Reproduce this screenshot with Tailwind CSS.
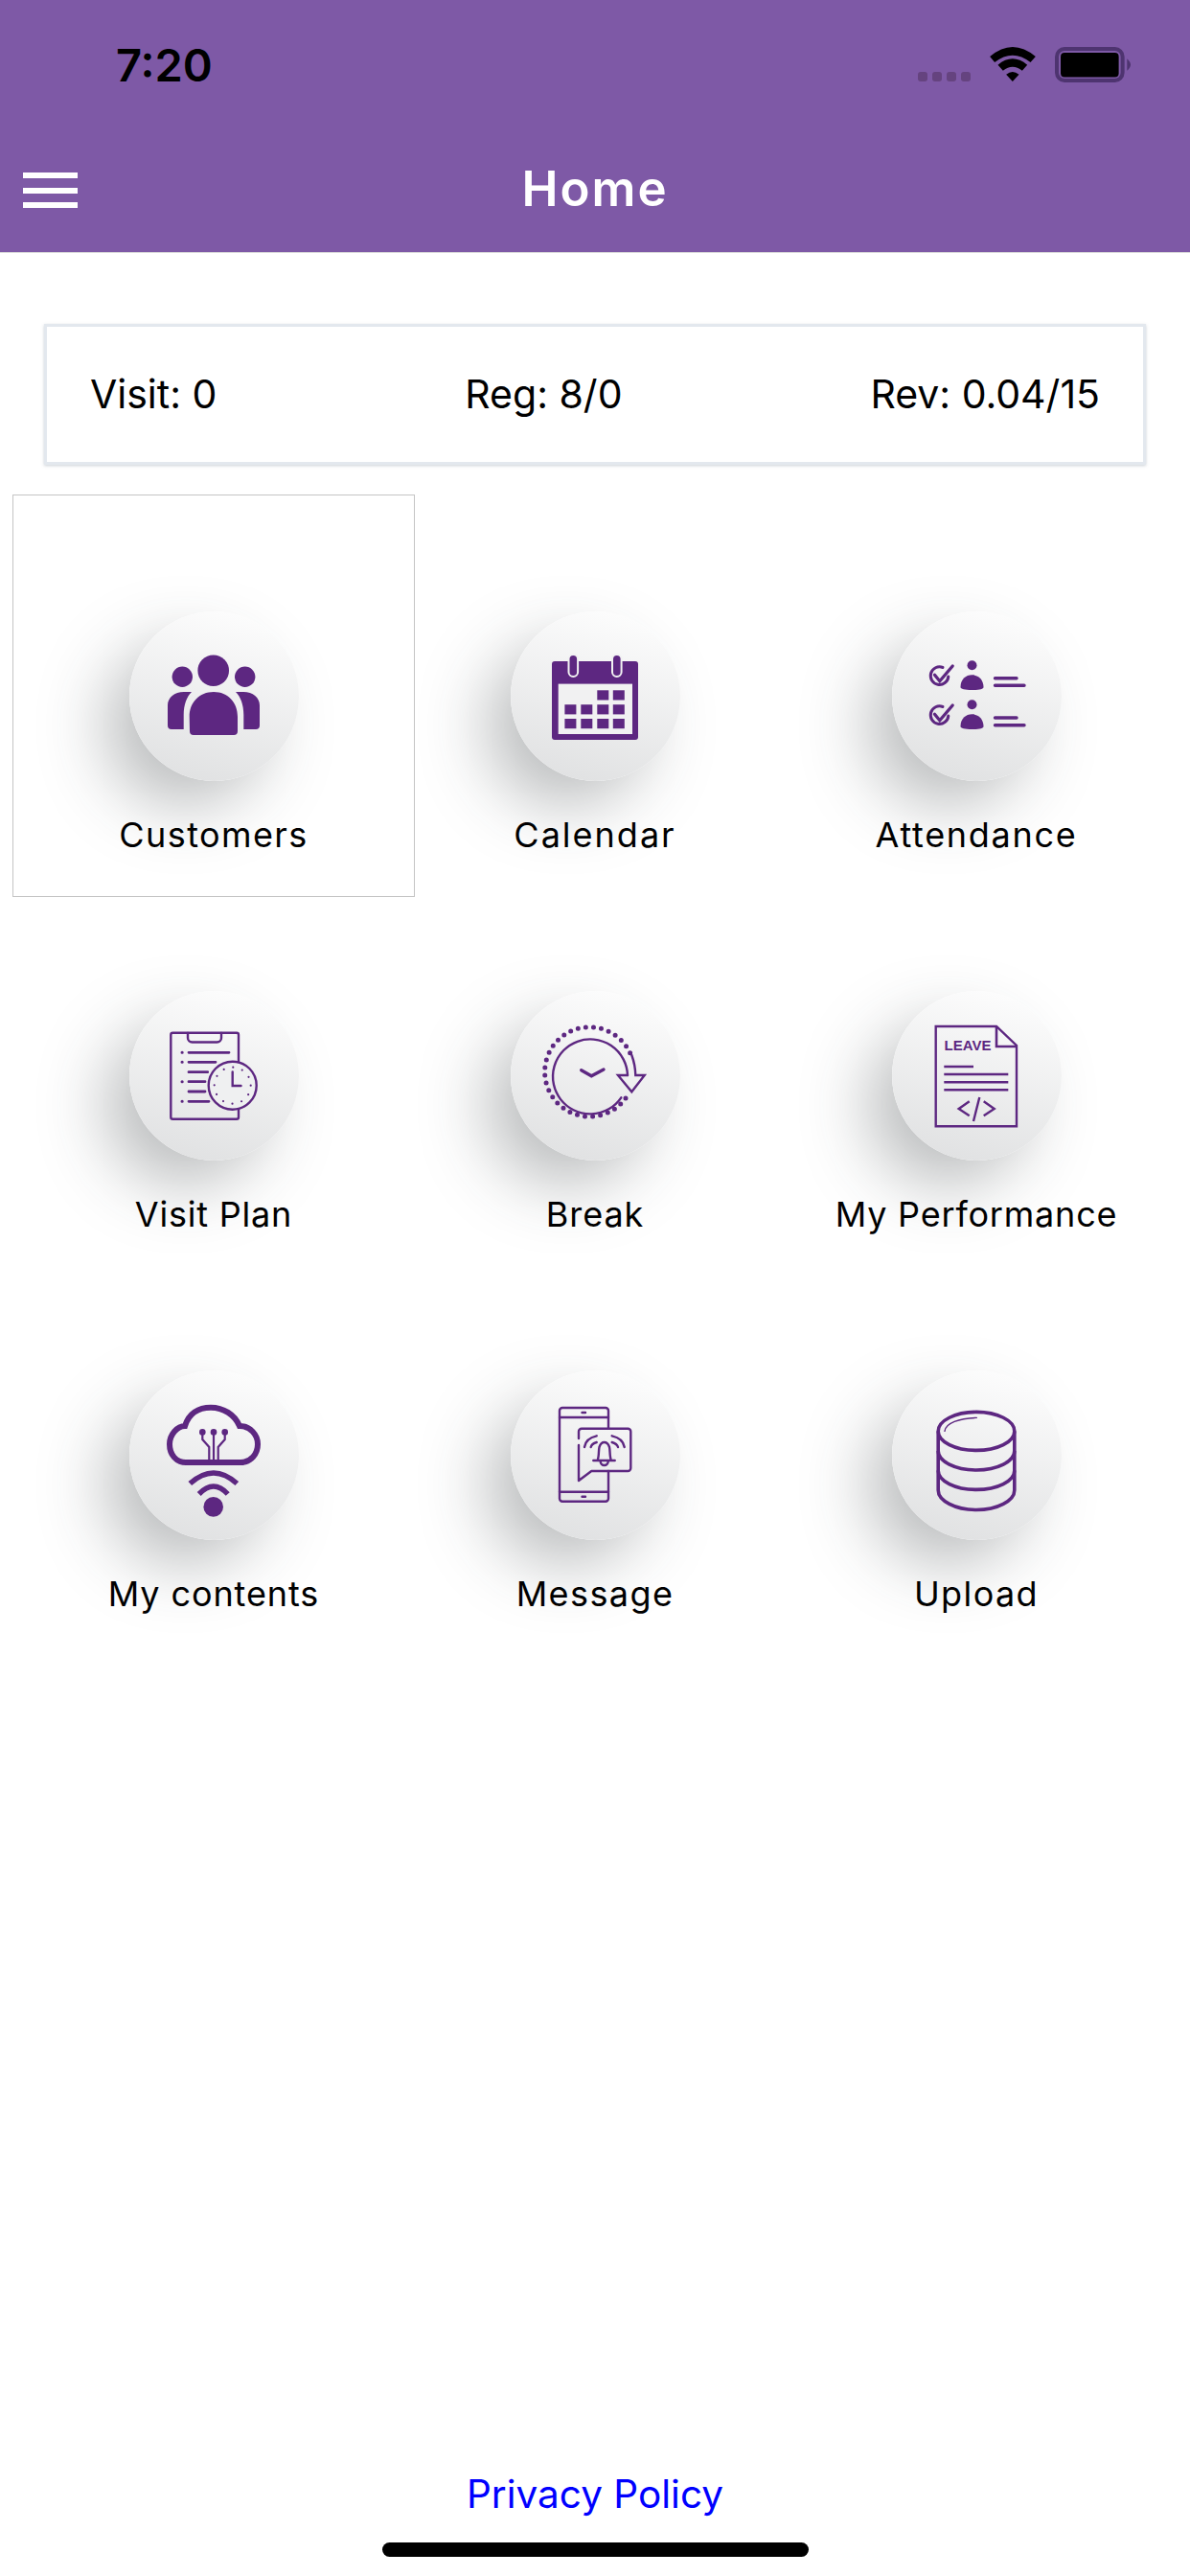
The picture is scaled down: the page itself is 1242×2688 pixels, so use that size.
<!DOCTYPE html>
<html lang="en">
<head>
    <meta charset="UTF-8">
    <meta name="viewport" content="width=device-width, initial-scale=1.0">
    <title>Home</title>
    <script src="https://cdn.jsdelivr.net/npm/@tailwindcss/browser@4"></script>
</head>
<body class="bg-white font-['Inter',sans-serif]">
    <div class="h-[2688px] flex flex-col">

        <!-- Header -->
        <header class="h-[264px] bg-[#7e59a6] border-b border-[#d9d9d9] flex flex-col shrink-0">
            <div class="h-[180px] flex items-start justify-between pt-[42px] pl-[121px] pr-[62px]">
                <span class="text-[47px] leading-[52px] font-semibold text-black">7:20</span>
                <div class="flex items-start pt-[7px]">
                    <div class="flex gap-[5px] mt-[26px] mr-[20px]">
                        <span class="w-[10px] h-[10px] rounded-[3px] bg-[#65437f]"></span>
                        <span class="w-[10px] h-[10px] rounded-[3px] bg-[#65437f]"></span>
                        <span class="w-[10px] h-[10px] rounded-[3px] bg-[#65437f]"></span>
                        <span class="w-[10px] h-[10px] rounded-[3px] bg-[#65437f]"></span>
                    </div>
                    <svg class="mr-[20px]" width="48" height="36" viewBox="275 42 143 108">
                        <path d="M275 72 Q346 12 418 72 L402 90 Q346 46 290 90Z" fill="#000"/>
                        <path d="M300 98 Q346 60 392 98 L376 116 Q346 92 316 116Z" fill="#000"/>
                        <path d="M326 128 Q346 112 366 128 L346 150Z" fill="#000"/>
                    </svg>
                    <svg width="79" height="37" viewBox="478 42 236 110">
                        <rect x="484" y="48" width="205" height="98" rx="24" fill="none" stroke="#4e3470" stroke-width="12"/>
                        <rect x="496" y="60" width="181" height="76" rx="12" fill="#000"/>
                        <path d="M703 78 Q714 88 714 97 Q714 106 703 116Z" fill="#4e3470"/>
                    </svg>
                </div>
            </div>
            <div class="relative flex items-center justify-center h-[37px]">
                <button class="absolute left-[24px] top-0 w-[57px] h-[37px] flex flex-col justify-between">
                    <span class="block h-[6px] bg-white"></span>
                    <span class="block h-[6px] bg-white"></span>
                    <span class="block h-[6px] bg-white"></span>
                </button>
                <h1 class="text-[51px] leading-[52px] tracking-[2px] font-semibold text-white -mt-[3px]">Home</h1>
            </div>
        </header>

        <!-- Stats -->
        <div class="mt-[74px] mx-[46px] h-[147px] bg-white border-[3px] border-[#e3e8ee] shadow-[0_1px_3px_rgba(110,125,140,0.35)] flex items-center justify-between px-[45px] text-[41px] text-black shrink-0">
            <span>Visit: 0</span>
            <span>Reg: 8/0</span>
            <span>Rev: 0.04/15</span>
        </div>

        <!-- Menu grid -->
        <div class="mt-[31px] ml-[24px] grid grid-cols-[repeat(3,398px)] auto-rows-[396px] text-[36px] leading-[40px] tracking-[1.4px] text-black text-center">

            <div class="relative pt-[122px]">
                <div class="absolute -left-[11px] top-0 w-[420px] h-[420px] border-[1.5px] border-[#c4c4c4]"></div>
                <div class="w-[177px] h-[177px] mx-auto rounded-full bg-linear-[195deg] from-white to-[#dedfe0] shadow-[-30px_30px_70px_-6px_rgba(50,55,60,0.34)]">
                    <svg class="block w-full h-full" viewBox="0 0 177 177" fill="#5d2781">
                        <circle cx="87.7" cy="61.7" r="16.3"/>
                        <circle cx="55.3" cy="68.3" r="10.7"/>
                        <circle cx="120.7" cy="68.3" r="10.7"/>
                        <path d="M62.7 110 C62.7 95 73 84 88 84 C103 84 113 95 113 110 V125 a4 4 0 0 1 -4 4 H67 a4 4 0 0 1 -4 -4Z"/>
                        <path d="M57 84 H65 C60 89 56.7 97 56.7 108 V123 H44 a4 4 0 0 1 -4 -4 V98 C40 90 47 84 57 84Z"/>
                        <path d="M119 84 H111 C116 89 119.3 97 119.3 108 V123 H132 a4 4 0 0 0 4 -4 V98 C136 90 129 84 119 84Z"/>
                    </svg>
                </div>
                <p class="relative mt-[36px]">Customers</p>
            </div>

            <div class="pt-[122px]">
                <div class="w-[177px] h-[177px] mx-auto rounded-full bg-linear-[195deg] from-white to-[#dedfe0] shadow-[-30px_30px_70px_-6px_rgba(50,55,60,0.34)]">
                    <svg class="block w-full h-full" viewBox="0 0 177 177" fill="#5d2781">
                        <path d="M46 52 H130 a3 3 0 0 1 3 3 V131 a3 3 0 0 1 -3 3 H46 a3 3 0 0 1 -3 -3 V55 a3 3 0 0 1 3 -3Z"/>
                        <rect x="49.7" y="75.6" width="77.3" height="52.4" fill="#f1f1f2"/>
                        <rect x="60.5" y="45" width="9.6" height="23" rx="4.8" fill="#5d2781" stroke="#f1f1f2" stroke-width="2"/>
                        <rect x="106" y="45" width="9.6" height="23" rx="4.8" fill="#5d2781" stroke="#f1f1f2" stroke-width="2"/>
                        <rect x="90.3" y="82.3" width="12" height="10.2"/>
                        <rect x="106.8" y="82.3" width="12" height="10.2"/>
                        <rect x="56.4" y="97.2" width="12" height="10.2"/>
                        <rect x="73.3" y="97.2" width="12" height="10.2"/>
                        <rect x="90.3" y="97.2" width="12" height="10.2"/>
                        <rect x="106.8" y="97.2" width="12" height="10.2"/>
                        <rect x="56.4" y="112" width="12" height="10.2"/>
                        <rect x="73.3" y="112" width="12" height="10.2"/>
                        <rect x="90.3" y="112" width="12" height="10.2"/>
                        <rect x="106.8" y="112" width="12" height="10.2"/>
                    </svg>
                </div>
                <p class="mt-[36px] tracking-[2px]">Calendar</p>
            </div>

            <div class="pt-[122px]">
                <div class="w-[177px] h-[177px] mx-auto rounded-full bg-linear-[195deg] from-white to-[#dedfe0] shadow-[-30px_30px_70px_-6px_rgba(50,55,60,0.34)]">
                    <svg class="block w-full h-full" viewBox="0 0 177 177" fill="none" stroke="#5d2781" stroke-linecap="round">
                        <g>
                            <path d="M58.8 68 A9.3 9.3 0 1 1 53 58.5" stroke-width="3"/>
                            <path d="M44.5 66.3 L49.8 72.7 L63.2 57" stroke-width="3.3"/>
                            <circle cx="83.5" cy="56.3" r="5" fill="#5d2781" stroke="none"/>
                            <path d="M71.5 79 C71.5 71 77 66.3 83.5 66.3 C90 66.3 95.5 71 95.5 79 C95.5 81 91 82 83.5 82 C76 82 71.5 81 71.5 79Z" fill="#5d2781" stroke="none"/>
                            <path d="M107.5 69.7 H130 M107.5 77.3 H138" stroke-width="3.4"/>
                        </g>
                        <g transform="translate(0 41)">
                            <path d="M58.8 68 A9.3 9.3 0 1 1 53 58.5" stroke-width="3"/>
                            <path d="M44.5 66.3 L49.8 72.7 L63.2 57" stroke-width="3.3"/>
                            <circle cx="83.5" cy="56.3" r="5" fill="#5d2781" stroke="none"/>
                            <path d="M71.5 79 C71.5 71 77 66.3 83.5 66.3 C90 66.3 95.5 71 95.5 79 C95.5 81 91 82 83.5 82 C76 82 71.5 81 71.5 79Z" fill="#5d2781" stroke="none"/>
                            <path d="M107.5 70 H130 M107.5 77.7 H138" stroke-width="3.4"/>
                        </g>
                    </svg>
                </div>
                <p class="mt-[36px] tracking-[1.7px]">Attendance</p>
            </div>

            <div class="pt-[122px]">
                <div class="w-[177px] h-[177px] mx-auto rounded-full bg-linear-[195deg] from-white to-[#dedfe0] shadow-[-30px_30px_70px_-6px_rgba(50,55,60,0.34)]">
                    <svg class="block w-full h-full" viewBox="0 0 177 177" fill="none" stroke="#5d2781" stroke-width="2.4" stroke-linecap="round">
                        <rect x="43.3" y="43.7" width="70.7" height="90" rx="2"/>
                        <path d="M61 44 V49 a4.5 4.5 0 0 0 4.5 4.5 H91.5 a4.5 4.5 0 0 0 4.5 -4.5 V44"/>
                        <path d="M62 64.3 H104 M62 74.3 H90 M62 84.7 H81.7 M62 94.7 H79 M62 105 H79 M62 115.3 H83" stroke-width="2.8"/>
                        <path d="M55 64.3 h.2 M55 74.3 h.2 M55 94.7 h.2 M55 115.3 h.2" stroke-width="3"/>
                        <circle cx="107.7" cy="98.7" r="25" fill="#eff0f1"/>
                        <path d="M107.7 84.5 V99 H116.5"/>
                        <circle cx="107.7" cy="98.7" r="19" stroke-width="2.2" stroke-dasharray="0 9.95"/>
                    </svg>
                </div>
                <p class="mt-[36px] tracking-[0.8px]">Visit Plan</p>
            </div>

            <div class="pt-[122px]">
                <div class="w-[177px] h-[177px] mx-auto rounded-full bg-linear-[195deg] from-white to-[#dedfe0] shadow-[-30px_30px_70px_-6px_rgba(50,55,60,0.34)]">
                    <svg class="block w-full h-full" viewBox="0 0 177 177" fill="none" stroke="#5d2781" stroke-width="2.4" stroke-linecap="round">
                        <path d="M120 112 A46.7 46.7 0 1 1 126 68" stroke-width="5" stroke-dasharray="0 8.1"/>
                        <path d="M115.3 111.3 A39 39 0 1 1 122 88"/>
                        <path d="M73.7 82.7 L84.3 88.7 L97 82" stroke-width="3.4"/>
                        <path d="M126.3 67 Q130 77 130.3 88 H139.7 L126.3 105.3 L112 88 H122" stroke-linejoin="miter"/>
                    </svg>
                </div>
                <p class="mt-[36px] tracking-[0.9px]">Break</p>
            </div>

            <div class="pt-[122px]">
                <div class="w-[177px] h-[177px] mx-auto rounded-full bg-linear-[195deg] from-white to-[#dedfe0] shadow-[-30px_30px_70px_-6px_rgba(50,55,60,0.34)]">
                    <svg class="block w-full h-full" viewBox="0 0 177 177" fill="none" stroke="#5d2781" stroke-width="2.4">
                        <path d="M45.7 37 H109 L130 57 V141.3 H45.7Z"/>
                        <path d="M109 37 V58 H130" stroke-width="2.6"/>
                        <text x="54.5" y="62" fill="#5d2781" stroke="none" font-family="Liberation Sans" font-weight="700" font-size="15" letter-spacing="0">LEAVE</text>
                        <path d="M54.3 79 H85 M54.3 87 H121.3 M54.3 95.3 H121.3 M54.3 103.3 H121.3"/>
                        <path d="M80.7 115.3 L69.7 123 L80.7 130.3 M95.7 115.3 L106.7 123 L95.7 130.3 M91.3 111 L85 136"/>
                    </svg>
                </div>
                <p class="mt-[36px] tracking-[0.8px]">My Performance</p>
            </div>

            <div class="pt-[122px]">
                <div class="w-[177px] h-[177px] mx-auto rounded-full bg-linear-[195deg] from-white to-[#dedfe0] shadow-[-30px_30px_70px_-6px_rgba(50,55,60,0.34)]">
                    <svg class="block w-full h-full" viewBox="0 0 177 177" fill="none" stroke="#5d2781">
                        <path d="M59 96 H116 C127 96 134 87 134 77 C134 67 126 58 115 58 C110 46 98 38.7 85 38.7 C72 38.7 62 45 58 58 C50 58 42 67 42 77 C42 88 49 96 59 96Z" stroke-width="6"/>
                        <path d="M76.3 64 V72 L83.3 80 V96 M88 64 V96 M99.7 64 V72 L92.7 80 V96" stroke-width="2.2"/>
                        <circle cx="76.3" cy="64.4" r="3.3" fill="#5d2781" stroke="none"/>
                        <circle cx="88" cy="64.4" r="3.3" fill="#5d2781" stroke="none"/>
                        <circle cx="99.7" cy="64.4" r="3.3" fill="#5d2781" stroke="none"/>
                        <path d="M63.3 118 Q88 96 112.3 118" stroke-width="5.5"/>
                        <path d="M72.7 129 Q88 113 102.7 129" stroke-width="5.5"/>
                        <circle cx="87.7" cy="142.4" r="10.3" fill="#5d2781" stroke="none"/>
                    </svg>
                </div>
                <p class="mt-[36px] tracking-[0.9px]">My contents</p>
            </div>

            <div class="pt-[122px]">
                <div class="w-[177px] h-[177px] mx-auto rounded-full bg-linear-[195deg] from-white to-[#dedfe0] shadow-[-30px_30px_70px_-6px_rgba(50,55,60,0.34)]">
                    <svg class="block w-full h-full" viewBox="0 0 177 177" fill="none" stroke="#5d2781" stroke-width="2.4" stroke-linecap="round" stroke-linejoin="round">
                        <path d="M102 60.7 V42 a3 3 0 0 0 -3 -3 H54 a3 3 0 0 0 -3 3 V133.7 a3 3 0 0 0 3 3 H99 a3 3 0 0 0 3 -3 V105"/>
                        <path d="M51 49 H102 M51 126.7 H102"/>
                        <path d="M74.5 44 H78 M74.5 131.7 H78" stroke-width="2.4"/>
                        <path d="M71 71 V63.7 a3 3 0 0 1 3 -3 H122.3 a3 3 0 0 1 3 3 V102 a3 3 0 0 1 -3 3 H84.3 L71 115 V78"/>
                        <path d="M86.3 94 H108.7 M90.5 94 C92.5 90 91.5 84 92.5 80 C93.5 77 95.5 75 97.7 75 C100 75 102 77 103 80 C104 84 103 90 105 94"/>
                        <path d="M93.7 95 a4 4 0 0 0 8 0"/>
                        <path d="M77 80 Q78 71 89.7 68.3 M83.7 80 Q84.5 76.5 89.7 75 M118.7 80 Q117.5 71 105.7 68.3 M112 80 Q111 76.5 105.7 75"/>
                    </svg>
                </div>
                <p class="mt-[36px]">Message</p>
            </div>

            <div class="pt-[122px]">
                <div class="w-[177px] h-[177px] mx-auto rounded-full bg-linear-[195deg] from-white to-[#dedfe0] shadow-[-30px_30px_70px_-6px_rgba(50,55,60,0.34)]">
                    <svg class="block w-full h-full" viewBox="0 0 177 177" fill="none" stroke="#5d2781" stroke-width="3.6">
                        <ellipse cx="88" cy="63.4" rx="39.8" ry="20"/>
                        <path d="M48.2 63.4 V125 C48.2 136 66 145.5 88 145.5 C110 145.5 127.8 136 127.8 125 V63.4"/>
                        <path d="M48.2 84 C48.2 95 66 104 88 104 C110 104 127.8 95 127.8 84"/>
                        <path d="M48.2 104.5 C48.2 115.5 66 124.4 88 124.4 C110 124.4 127.8 115.5 127.8 104.5"/>
                        <path d="M55 63.4 C56 55 70 50 88.3 49.4" stroke-width="1.4" stroke-linecap="round"/>
                    </svg>
                </div>
                <p class="mt-[36px]">Upload</p>
            </div>
        </div>

        <div class="flex-1"></div>

        <!-- Footer -->
        <a href="#" class="text-center text-[40.5px] leading-[48px] text-[#0000ff]">Privacy Policy</a>
        <div class="mt-[26px] mb-[20px] mx-auto w-[445px] h-[15px] rounded-full bg-black"></div>
    </div>
</body>
</html>
